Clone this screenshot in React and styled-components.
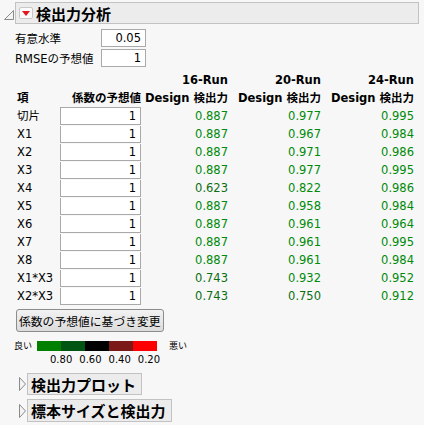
import React from 'react';
import styled, { createGlobalStyle } from 'styled-components';

const Global = createGlobalStyle`
  body {
    margin: 0;
    background: #f7f7f7;
    font-family: "DejaVu Sans", "Noto Sans CJK JP", sans-serif;
    font-size: 11px;
    color: #000;
  }
`;

const Page = styled.div`
  width: 424px;
  height: 425px;
  padding: 2px 5px 0 3px;
  box-sizing: border-box;
  overflow: hidden;
`;

const OutlineRow = styled.div`
  display: flex;
  align-items: ${p => (p.$center ? 'center' : 'flex-start')};
  margin-left: ${p => p.$indent || 0}px;
  margin-top: ${p => p.$top || 0}px;
`;

const Disclosure = styled.svg`
  flex-shrink: 0;
  width: ${p => p.$w || 12}px;
  height: 22px;
`;

const TitleBar = styled.div`
  flex: ${p => (p.$grow ? 1 : 'none')};
  display: flex;
  align-items: center;
  height: ${p => p.$h || 22}px;
  box-sizing: border-box;
  padding: 0 ${p => (p.$grow ? 6 : 5)}px 0 3px;
  background: #ececec;
  border: 1px solid #c2c2c2;
`;

const RedMenu = styled.span`
  display: inline-flex;
  align-items: center;
  justify-content: center;
  width: 14px;
  height: 12px;
  margin-right: 3px;
  border: 1px solid #c8c8c8;
  border-radius: 2px;
  background: #fbfbfb;
  box-sizing: border-box;
`;

const Title = styled.span`
  font-family: "Noto Sans CJK JP", sans-serif;
  font-weight: 700;
  font-size: ${p => p.$size || 15}px;
  line-height: 1;
`;

const Content = styled.div`
  padding-left: 12px;
`;

const ParamRow = styled.div`
  display: flex;
  align-items: center;
  height: 19px;
  margin-top: ${p => p.$top || 0}px;
`;

const ParamLabel = styled.span`
  width: 86px;
  font-size: 11.5px;
`;

const Field = styled.div`
  width: ${p => p.$w}px;
  height: ${p => p.$h || 18}px;
  box-sizing: border-box;
  background: #fff;
  border: 1px solid #a9a9a9;
  text-align: right;
  padding-right: 4px;
  font-size: 11.5px;
  line-height: ${p => (p.$h || 18) - 2}px;
`;

const Table = styled.div`
  display: grid;
  grid-template-columns: 45px 81px 87px 93px 93px;
  grid-auto-rows: 18px;
  margin-top: 4px;
`;

const Head = styled.div`
  font-weight: 700;
  font-size: 11.5px;
  line-height: 18px;
  white-space: nowrap;
  text-align: ${p => p.$align || 'right'};
  padding-left: ${p => p.$pl || 0}px;
`;

const Term = styled.div`
  line-height: 18px;
  font-size: 11.5px;
  padding-left: 2px;
  white-space: nowrap;
`;

const Cell = styled.div`
  background: #fff;
  border: 1px solid #a9a9a9;
  border-top: ${p => (p.$first ? '1px solid #a9a9a9' : 'none')};
  height: ${p => (p.$first ? 18 : 17)}px;
  margin-top: ${p => (p.$first ? 0 : 1)}px;
  box-sizing: border-box;
  text-align: right;
  padding-right: 4px;
  font-size: 11.5px;
  line-height: 16px;
`;

const Value = styled.div`
  text-align: right;
  line-height: 18px;
  font-size: 11.5px;
  color: ${p => p.$color};
`;

const Button = styled.button`
  margin-top: 4px;
  margin-left: 1px;
  height: 23px;
  padding: 0 2px;
  font-family: "Noto Sans CJK JP", sans-serif;
  font-size: 11.8px;
  color: #000;
  background: linear-gradient(#f2f2f2, #dcdcdc);
  border: 1px solid #8c8c8c;
  border-radius: 3px;
`;

const Legend = styled.div`
  display: flex;
  align-items: center;
  margin-top: 8px;
  margin-left: -1px;
  height: 11px;
`;

const LegendWord = styled.span`
  font-size: 9px;
  font-family: "Noto Sans CJK JP", sans-serif;
  width: ${p => p.$w}px;
  padding-left: ${p => p.$pl || 0}px;
  white-space: nowrap;
`;

const Bar = styled.div`
  display: flex;
  width: 120px;
  height: 10px;
`;

const Swatch = styled.div`
  flex: 1;
  background: ${p => p.$c};
`;

const Ticks = styled.div`
  display: flex;
  gap: 7px;
  margin-left: 35px;
  margin-top: 2px;
  font-size: 10px;
  line-height: 14px;
`;

const rows = [
  ['切片', '0.887', '0.977', '0.995'],
  ['X1', '0.887', '0.967', '0.984'],
  ['X2', '0.887', '0.971', '0.986'],
  ['X3', '0.887', '0.977', '0.995'],
  ['X4', '0.623', '0.822', '0.986'],
  ['X5', '0.887', '0.958', '0.984'],
  ['X6', '0.887', '0.961', '0.964'],
  ['X7', '0.887', '0.961', '0.995'],
  ['X8', '0.887', '0.961', '0.984'],
  ['X1*X3', '0.743', '0.932', '0.952'],
  ['X2*X3', '0.743', '0.750', '0.912'],
];

const tone = v => (parseFloat(v) < 0.8 ? '#0b6e12' : '#008a0a');

const DownCorner = () => (
  <Disclosure viewBox="0 0 12 22">
    <polygon points="10.5,8.5 10.5,17.5 1.5,17.5" fill="#f4f4f4" stroke="#8a8a8a" strokeWidth="1" />
  </Disclosure>
);

const RightTri = () => (
  <Disclosure viewBox="0 0 9 22" $w={9}>
    <polygon points="1.5,4.5 7.5,11 1.5,17.5" fill="#f4f4f4" stroke="#8a8a8a" strokeWidth="1" />
  </Disclosure>
);

const App = () => (
  <>
    <Global />
    <Page>
      <OutlineRow>
        <DownCorner />
        <TitleBar $grow>
          <RedMenu>
            <svg width="8" height="5" viewBox="0 0 8 5">
              <polygon points="0,0 8,0 4,5" fill="#e8141e" />
            </svg>
          </RedMenu>
          <Title>検出力分析</Title>
        </TitleBar>
      </OutlineRow>

      <Content>
        <ParamRow $top={4}>
          <ParamLabel>有意水準</ParamLabel>
          <Field $w={45}>0.05</Field>
        </ParamRow>
        <ParamRow $top={1}>
          <ParamLabel>RMSEの予想値</ParamLabel>
          <Field $w={45}>1</Field>
        </ParamRow>

        <Table>
          <div />
          <div />
          <Head>16-Run</Head>
          <Head>20-Run</Head>
          <Head>24-Run</Head>
          <Head $align="left" $pl={2}>項</Head>
          <Head>係数の予想値</Head>
          <Head>Design 検出力</Head>
          <Head>Design 検出力</Head>
          <Head>Design 検出力</Head>
          {rows.map((r, i) => (
            <React.Fragment key={r[0]}>
              <Term>{r[0]}</Term>
              <Cell $first={i === 0}>1</Cell>
              <Value $color={tone(r[1])}>{r[1]}</Value>
              <Value $color={tone(r[2])}>{r[2]}</Value>
              <Value $color={tone(r[3])}>{r[3]}</Value>
            </React.Fragment>
          ))}
        </Table>

        <Button type="button">係数の予想値に基づき変更</Button>

        <Legend>
          <LegendWord $w={23}>良い</LegendWord>
          <Bar>
            <Swatch $c="#008000" />
            <Swatch $c="#005512" />
            <Swatch $c="#000000" />
            <Swatch $c="#7b1818" />
            <Swatch $c="#ff0000" />
          </Bar>
          <LegendWord $w={30} $pl={12}>悪い</LegendWord>
        </Legend>
        <Ticks>
          <span>0.80</span>
          <span>0.60</span>
          <span>0.40</span>
          <span>0.20</span>
        </Ticks>
      </Content>

      <OutlineRow $indent={15} $top={6} $center>
        <RightTri />
        <TitleBar $h={22}>
          <Title $size={15}>検出力プロット</Title>
        </TitleBar>
      </OutlineRow>
      <OutlineRow $indent={15} $top={4} $center>
        <RightTri />
        <TitleBar $h={23}>
          <Title $size={15}>標本サイズと検出力</Title>
        </TitleBar>
      </OutlineRow>
    </Page>
  </>
);

export default App;
